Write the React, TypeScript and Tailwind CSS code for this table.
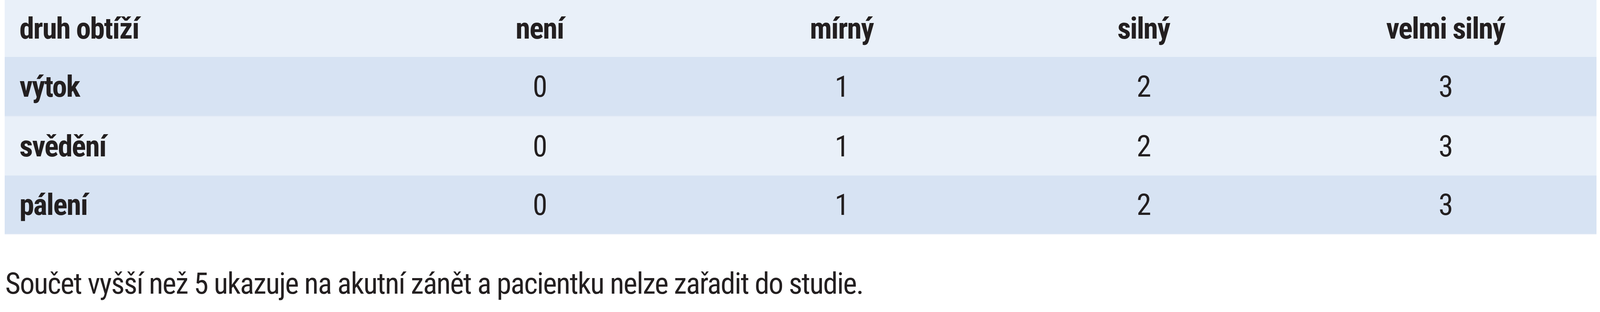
import React from "react";

const rows = [
  { label: "výtok", values: ["0", "1", "2", "3"], dark: true, h: "h-[153px]" },
  { label: "svědění", values: ["0", "1", "2", "3"], dark: false, h: "h-[151px]" },
  { label: "pálení", values: ["0", "1", "2", "3"], dark: true, h: "h-[151px]" },
];

const font = { fontFamily: "'Roboto Condensed', 'Liberation Sans', sans-serif" };

export default function App() {
  return (
    <div
      className="w-full h-[800px] bg-white pl-[0.3%] pr-[0.22%] text-[#231f20] text-[76px] leading-[76px] tracking-[-2px]"
      style={font}
    >
      <div className="w-full flex flex-col">
        <div className="grid grid-cols-[1185fr_repeat(4,932fr)] h-[146px] bg-[#e9f0f9] items-center font-bold">
          <div className="pl-[3.8%]">druh obtíží</div>
          <div className="text-center">není</div>
          <div className="text-center">mírný</div>
          <div className="text-center">silný</div>
          <div className="text-center">velmi silný</div>
        </div>
        {rows.map((r) => (
          <div
            key={r.label}
            className={`grid grid-cols-[1185fr_repeat(4,932fr)] items-center ${r.h} ${
              r.dark ? "bg-[#d7e3f3] border-b-[2px] border-[#e2eaf6]" : "bg-[#e9f0f9]"
            }`}
          >
            <div className="pl-[3.8%] font-bold">{r.label}</div>
            {r.values.map((v, i) => (
              <div key={i} className="text-center">
                {v}
              </div>
            ))}
          </div>
        ))}
      </div>
      <p className="mt-[88px] pl-[1px]">Součet vyšší než 5 ukazuje na akutní zánět a pacientku nelze zařadit do studie.</p>
    </div>
  );
}
